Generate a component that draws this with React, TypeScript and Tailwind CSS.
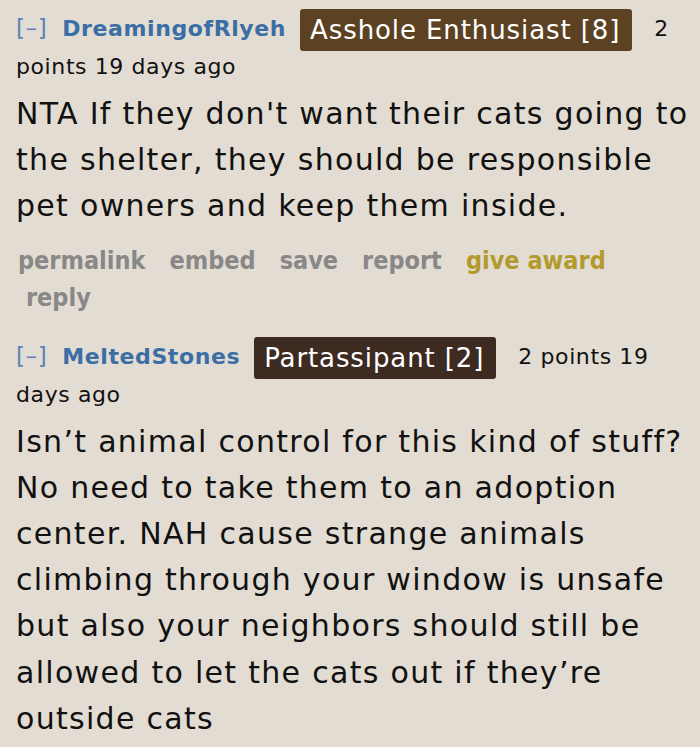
import React from 'react';

interface CommentProps {
  author: string;
  flair: string;
  flairBg: string;
  meta: string;
  body: string;
  topClass?: string;
}

const Comment: React.FC<CommentProps> = ({ author, flair, flairBg, meta, body, topClass = '' }) => {
  return (
    <div className={topClass}>
      {/* Header */}
      <p className="text-[22px] leading-[32px] tracking-[0.6px] text-[#111] font-['DejaVu_Sans',sans-serif]">
        <span className="text-[23px] text-[#5a84b6] mr-[15px]">[–]</span>
        <span className="font-bold text-[#3a6ea5] mr-[14px]">{author}</span>
        <span
          className={`inline-block align-middle ${flairBg} text-white text-[26px] tracking-[0.9px] leading-[42px] pl-[10px] pr-[12px] rounded-[3px] mr-[22px]`}
        >
          {flair}
        </span>
        <span>{meta}</span>
      </p>

      {/* Body */}
      <p className="mt-[8px] text-[30px] leading-[46.2px] tracking-[1.3px] text-[#111] font-['DejaVu_Sans',sans-serif]">
        {body}
      </p>
    </div>
  );
};

export default function App() {
  return (
    <div className="w-[700px] h-[747px] bg-[#e3dcd2] pl-4 pr-[6px] pt-[9px] overflow-hidden">
      <Comment
        author="DreamingofRlyeh"
        flair="Asshole Enthusiast [8]"
        flairBg="bg-[#5c4222]"
        meta="2 points 19 days ago"
        body="NTA If they don't want their cats going to the shelter, they should be responsible pet owners and keep them inside."
      />

      {/* Actions */}
      <ul className="mt-[12px] flex flex-wrap gap-x-[24px] text-[25px] leading-[37px] font-bold text-[#888888] font-['Liberation_Sans_Narrow','DejaVu_Sans_Condensed',sans-serif] pl-[2px]">
        <li>permalink</li>
        <li>embed</li>
        <li>save</li>
        <li>report</li>
        <li className="text-[#b39a2e]">give award</li>
        <li className="pl-[8px]">reply</li>
      </ul>

      <Comment
        topClass="mt-[21px]"
        author="MeltedStones"
        flair="Partassipant [2]"
        flairBg="bg-[#3d2a21]"
        meta="2 points 19 days ago"
        body="Isn’t animal control for this kind of stuff? No need to take them to an adoption center. NAH cause strange animals climbing through your window is unsafe but also your neighbors should still be allowed to let the cats out if they’re outside cats"
      />
    </div>
  );
}
